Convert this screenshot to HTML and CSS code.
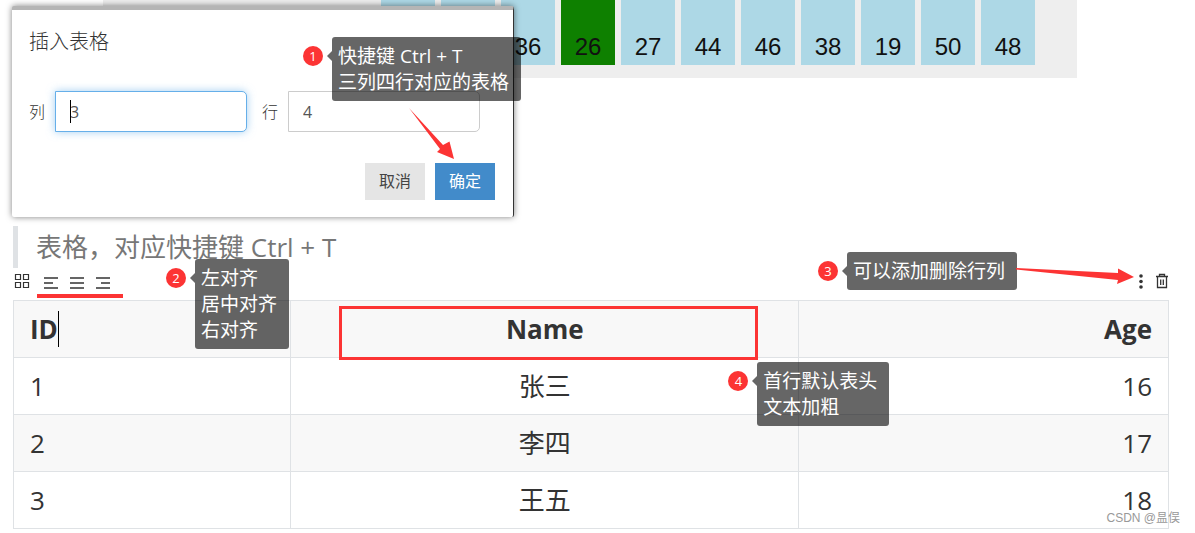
FILE: index.html
```
<!DOCTYPE html>
<html lang="zh-CN">
<head>
  <meta charset="UTF-8">
  <meta name="viewport" content="width=device-width, initial-scale=1.0">
  <title>插入表格</title>
  <link rel="stylesheet" href="styles.css">
</head>
<body>
  <div class="top">
    <div class="bars">
      <span class="bar"></span>
      <span class="bar"></span>
      <span class="bar">36</span>
      <span class="bar active">26</span>
      <span class="bar">27</span>
      <span class="bar">44</span>
      <span class="bar">46</span>
      <span class="bar">38</span>
      <span class="bar">19</span>
      <span class="bar">50</span>
      <span class="bar">48</span>
    </div>

    <form class="dialog">
      <h2>插入表格</h2>
      <div class="fields">
        <label for="cols">列</label>
        <span class="field">
          <input id="cols" class="focused" type="text" value="3">
          <i class="caret"></i>
        </span>
        <label for="rows">行</label>
        <span class="field"><input id="rows" type="text" value="4"></span>
      </div>
      <div class="actions">
        <button type="button" class="btn">取消</button>
        <button type="button" class="btn primary">确定</button>
      </div>
    </form>

    <div class="note note-1">
      <span class="num">1</span>
      <p>快捷键 Ctrl + T<br>三列四行对应的表格</p>
    </div>
    <svg class="arrow arrow-1" width="46" height="52" viewBox="0 0 46 52">
      <path d="M0 0 L34 37 L40.500 33.500 L45 51 L28 44 L31 41 Z" fill="#fc3434"/>
    </svg>
  </div>

  <main class="editor">
    <blockquote>表格，对应快捷键 Ctrl + T</blockquote>

    <div class="toolbar">
      <button type="button" class="tool" aria-label="调整表格">
        <svg width="16" height="16" viewBox="0 0 16 16" fill="none" stroke="#333" stroke-width="1.2">
          <path d="M1.500 1.500h5v5h-5zM9.500 1.500h5v5h-5zM1.500 9.500h5v5h-5zM9.500 9.500h5v5h-5z"/>
        </svg>
      </button>
      <div class="aligns">
        <button type="button" class="tool" aria-label="左对齐">
          <svg width="16" height="16" viewBox="0 0 16 16" fill="none" stroke="#333" stroke-width="1.500">
            <path d="M1 3h14M1 8h9M1 13h14"/>
          </svg>
        </button>
        <button type="button" class="tool" aria-label="居中对齐">
          <svg width="16" height="16" viewBox="0 0 16 16" fill="none" stroke="#333" stroke-width="1.500">
            <path d="M1 3h14M1 8h14M1 13h14"/>
          </svg>
        </button>
        <button type="button" class="tool" aria-label="右对齐">
          <svg width="16" height="16" viewBox="0 0 16 16" fill="none" stroke="#333" stroke-width="1.500">
            <path d="M1 3h14M6 8h9M1 13h14"/>
          </svg>
        </button>
      </div>
      <button type="button" class="tool more" aria-label="更多">
        <svg width="4" height="16" viewBox="0 0 4 16" fill="#333">
          <circle cx="2" cy="3" r="1.800"/><circle cx="2" cy="8.500" r="1.800"/><circle cx="2" cy="14" r="1.800"/>
        </svg>
      </button>
      <button type="button" class="tool" aria-label="删除">
        <svg width="14" height="16" viewBox="0 0 14 16" fill="none" stroke="#333" stroke-width="1.300">
          <path d="M1 3.500h12M4.500 3V1.500h5V3M2.500 4v10.500h9V4M5.700 6.500v5.500M8.300 6.500v5.500"/>
        </svg>
      </button>
    </div>

    <div class="note note-2">
      <span class="num">2</span>
      <p>左对齐<br>居中对齐<br>右对齐</p>
    </div>

    <div class="note note-3">
      <span class="num">3</span>
      <p>可以添加删除行列</p>
    </div>
    <svg class="arrow arrow-3" width="119" height="17" viewBox="0 0 119 17">
      <path d="M0 0 L102 5 L102 .5 L118 9 L101 16 L102 12 L0 1.500 Z" fill="#fc3434"/>
    </svg>

    <table>
      <thead>
        <tr>
          <th class="left">ID<i class="caret"></i></th>
          <th class="center">Name<span class="frame"></span></th>
          <th class="right">Age</th>
        </tr>
      </thead>
      <tbody>
        <tr>
          <td class="left">1</td>
          <td class="center">张三
            <div class="note note-4">
              <span class="num">4</span>
              <p>首行默认表头<br>文本加粗</p>
            </div>
          </td>
          <td class="right">16</td>
        </tr>
        <tr>
          <td class="left">2</td>
          <td class="center">李四</td>
          <td class="right">17</td>
        </tr>
        <tr>
          <td class="left">3</td>
          <td class="center">王五</td>
          <td class="right">18</td>
        </tr>
      </tbody>
    </table>
    <span class="watermark">CSDN @昷俣</span>
  </main>
</body>
</html>
```
FILE: styles.css
```
* {
  box-sizing: border-box;
}
body {
  margin: 0;
  font-family: "Open Sans", "Noto Sans CJK SC", sans-serif;
  color: #333;
  background: #fff;
}
.top {
  position: relative;
  padding-bottom: 148px;
}

/* bar strip behind the dialog */
.bars {
  display: flex;
  gap: 6px;
  height: 78px;
  margin-left: 103px;
  margin-right: 118px;
  padding: 0 42px 13px 0;
  justify-content: flex-end;
  background: #eee;
}
.bar {
  display: flex;
  align-items: flex-end;
  justify-content: center;
  width: 54px;
  padding-bottom: 4px;
  font: 24px/28px "Liberation Sans", Arial, sans-serif;
  color: #111;
  background: #add8e6;
}
.bar.active {
  background: #0e8000;
}

/* dialog */
.dialog {
  position: absolute;
  top: 6px;
  left: 12px;
  width: 502px;
  padding: 18px 18px 17px 17px;
  background: #fff;
  border-top: 4px solid #b5b5b5;
  border-right: 1px solid #333;
  border-radius: 2px;
  box-shadow: 0 0 6px rgba(0, 0, 0, 0.5);
}
.dialog h2 {
  margin: 0 0 35px;
  font-size: 20px;
  font-weight: 300;
  line-height: 28px;
}
.fields {
  display: flex;
  align-items: center;
  font-size: 16px;
}
.fields label {
  margin-right: 10px;
  padding-bottom: 2px;
  font-weight: 300;
}
.field {
  position: relative;
  width: 192px;
  margin-right: 15px;
}
.field input {
  display: block;
  width: 100%;
  height: 41px;
  padding: 0 14px;
  font: inherit;
  color: #555;
  border: 1px solid #ccc;
  border-radius: 0 5px 5px 0;
  outline: none;
}
.field input.focused {
  border-color: #66afe9;
  box-shadow: 0 0 8px rgba(102, 175, 233, 0.6);
}
.field .caret {
  position: absolute;
  top: 9px;
  left: 15px;
  width: 1px;
  height: 23px;
  background: #000;
}
.actions {
  display: flex;
  justify-content: flex-end;
  gap: 10px;
  margin-top: 31px;
}
.btn {
  height: 37px;
  padding: 0 14px 4px;
  font: 16px "Open Sans", "Noto Sans CJK SC", sans-serif;
  color: #444;
  background: #e5e5e5;
  border: 0;
  cursor: pointer;
}
.btn.primary {
  color: #fff;
  background: #428bca;
}

/* editor */
.editor {
  position: relative;
  padding: 0 26px 0 13px;
}
blockquote {
  margin: 0;
  padding-left: 18px;
  font-size: 26px;
  line-height: 42px;
  color: #777;
  border-left: 5px solid #dfe2e5;
}
.toolbar {
  display: flex;
  align-items: center;
  height: 32px;
  padding: 0 0 6px 1px;
}
.tool {
  display: block;
  padding: 0;
  background: none;
  border: 0;
  cursor: pointer;
}
.tool svg {
  display: block;
}
.aligns {
  display: flex;
  align-items: flex-start;
  gap: 10px;
  height: 28px;
  margin-top: 6px;
  margin-left: 7px;
  padding: 5px 12px 0 6px;
  border-bottom: 4px solid #fc3434;
}
.more {
  margin-left: auto;
  margin-right: 12px;
}
table {
  width: 100%;
  table-layout: fixed;
  border-collapse: collapse;
}
th, td {
  position: relative;
  height: 57px;
  padding: 0 16px;
  font-size: 26px;
  line-height: 36px;
  border: 1px solid #dfe2e5;
}
th, tbody tr:nth-child(even) {
  background: #f8f8f8;
}
th:nth-child(1) {
  width: 24%;
}
th:nth-child(2) {
  width: 44%;
}
.left {
  text-align: left;
}
.center {
  text-align: center;
}
.right {
  text-align: right;
}
th .caret {
  display: inline-block;
  width: 1px;
  height: 36px;
  vertical-align: bottom;
  background: #000;
}

/* notes */
.note {
  position: absolute;
  z-index: 2;
  padding: 6px 12px 6px 6px;
  font-size: 19px;
  font-weight: 400;
  line-height: 26px;
  text-align: left;
  white-space: nowrap;
  color: #fff;
  background: rgba(0, 0, 0, 0.6);
  border-radius: 3px;
}
.note p {
  margin: 0;
}
.note::before {
  content: "";
  position: absolute;
  top: 14px;
  left: -5px;
  border: 5px solid transparent;
  border-left: 0;
  border-right-color: rgba(0, 0, 0, 0.6);
}
.num {
  position: absolute;
  top: 9px;
  left: -29px;
  width: 20px;
  height: 20px;
  font-size: 13px;
  line-height: 20px;
  text-align: center;
  background: #fc3434;
  border-radius: 50%;
}
.note-1 {
  top: 37px;
  left: 332px;
}
.note-2 {
  top: 33px;
  left: 195px;
}
.note-3 {
  top: 26px;
  right: 178px;
}
.note-4 {
  top: 4px;
  right: -91px;
}
.frame {
  position: absolute;
  z-index: 1;
  top: 5px;
  right: 40px;
  bottom: -3px;
  left: 48px;
  border: 3px solid #fc3434;
}
.arrow {
  position: absolute;
  z-index: 2;
}
.arrow-1 {
  top: 108px;
  left: 409px;
}
.arrow-3 {
  top: 42px;
  right: 60px;
}
.watermark {
  position: absolute;
  right: 15px;
  bottom: 2px;
  font: 12px/18px "Liberation Sans", "Noto Sans CJK SC", sans-serif;
  color: #999;
}
```
